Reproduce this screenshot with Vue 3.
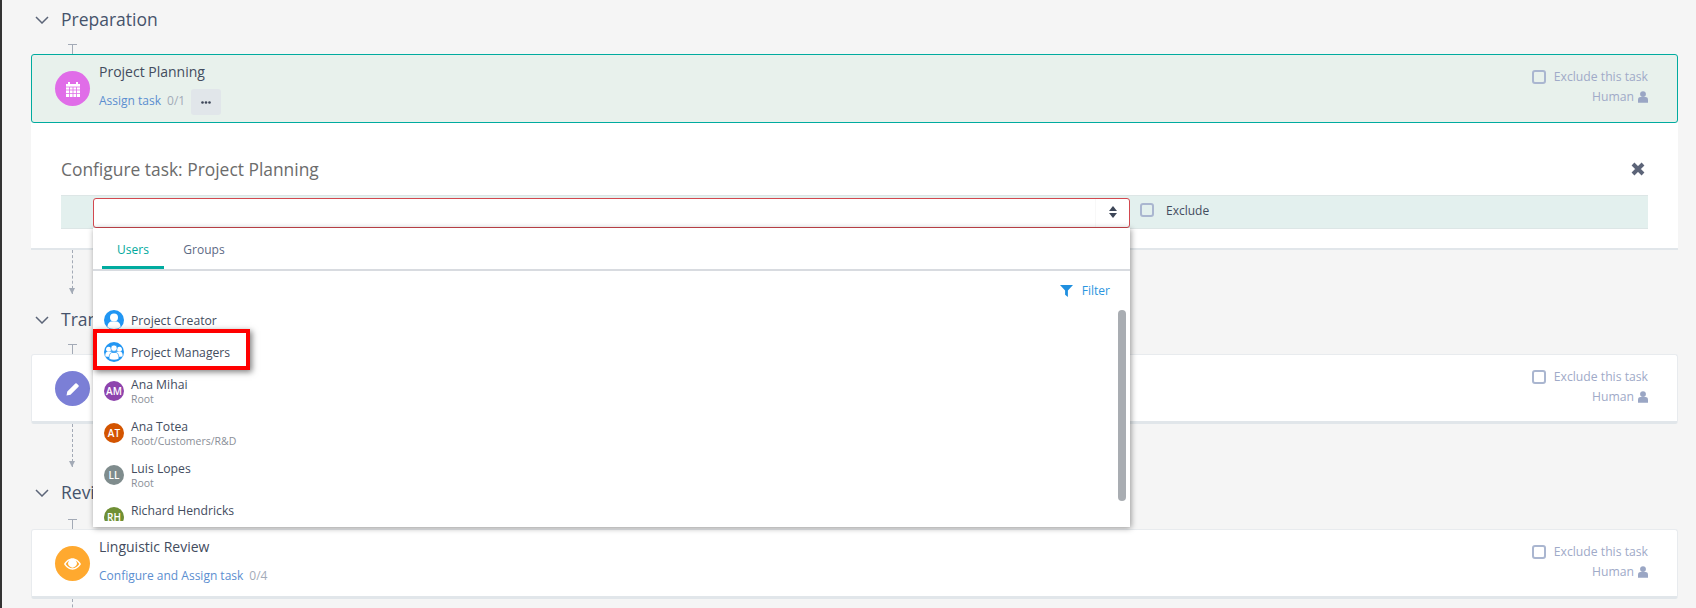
<script setup>
const users = [
  { initials: 'AM', name: 'Ana Mihai', path: 'Root', color: '#8e44ad' },
  { initials: 'AT', name: 'Ana Totea', path: 'Root/Customers/R&D', color: '#d35400' },
  { initials: 'LL', name: 'Luis Lopes', path: 'Root', color: '#7f8c8d' },
  { initials: 'RH', name: 'Richard Hendricks', path: 'Root', color: '#6f8f35' }
]
</script>

<template>
  <div class="page">
    <section class="stage">
      <header class="stage-head">
        <svg class="chevron" viewBox="0 0 14 8"><path d="M1 1l6 6 6-6" /></svg>
        <h2>Preparation</h2>
      </header>
      <div class="tee"></div>
      <article class="card selected">
        <span class="badge purple">
          <svg viewBox="0 0 16 16" class="glyph">
            <path fill="#fff" d="M1 3h2V1h2v2h6V1h2v2h2v13H1z" />
            <path stroke="#e06de8" stroke-width=".8" fill="none" d="M1 6h14M1 9h14M1 12.500h14M4.500 6v10M8 6v10M11.500 6v10" />
          </svg>
        </span>
        <div class="card-main">
          <div class="task-title">Project Planning</div>
          <div class="task-links">
            <a>Assign task</a><span class="count">0/1</span>
            <span class="more">
              <svg viewBox="0 0 10 3" class="dots"><circle cx="1.500" cy="1.500" r="1.300" /><circle cx="5" cy="1.500" r="1.300" /><circle cx="8.500" cy="1.500" r="1.300" /></svg>
            </span>
          </div>
        </div>
        <div class="card-side">
          <label class="exclude"><i class="check"></i>Exclude this task</label>
          <div class="kind">Human
            <svg viewBox="0 0 12 14" class="user"><circle cx="6" cy="3.500" r="3.500" /><path d="M0 14v-4c0-2 1.500-3 3-3h6c1.500 0 3 1 3 3v4z" /></svg>
          </div>
        </div>
      </article>

      <div class="config">
        <div class="config-head">
          <h3>Configure task: Project Planning</h3>
          <svg class="close" viewBox="0 0 14 14"><path d="M2 2l10 10M12 2L2 12" /></svg>
        </div>
        <div class="assign-row">
          <div class="select">
            <span class="carets"><i class="up"></i><i class="down"></i></span>
          </div>
          <i class="check row-check"></i>
          <span class="row-label">Exclude</span>

          <div class="dropdown">
            <nav class="tabs">
              <span class="tab active">Users</span>
              <span class="tab">Groups</span>
            </nav>
            <div class="filter">
              <svg viewBox="0 0 14 14" class="funnel"><path d="M0 1h14L8.500 7v7L5.500 11.500V7z" /></svg>
              <span>Filter</span>
            </div>
            <ul class="list">
              <li class="entry">
                <svg class="roundel" viewBox="0 0 20 20">
                  <circle cx="10" cy="10" r="10" fill="#2196f3" />
                  <circle cx="10" cy="7.500" r="4" fill="#fff" />
                  <path d="M3.500 17c0-4 2.500-5.500 4-5.500h5c1.500 0 4 1.500 4 5.500-3 2.500-10 2.500-13 0z" fill="#fff" />
                </svg>
                <span class="entry-name">Project Creator</span>
              </li>
              <li class="entry">
                <svg class="roundel" viewBox="0 0 20 20">
                  <circle cx="10" cy="10" r="10" fill="#2196f3" />
                  <circle cx="4.600" cy="7.300" r="2.500" fill="#fff" />
                  <circle cx="15.400" cy="7.300" r="2.500" fill="#fff" />
                  <path d="M1.400 14.500c-.4-3.500 1-4.800 2.400-4.800h4v5.500zM18.600 14.500c.4-3.500-1-4.800-2.400-4.800h-4v5.500z" fill="#fff" />
                  <circle cx="10" cy="6.200" r="3.200" fill="#fff" stroke="#2196f3" stroke-width=".7" />
                  <path d="M5 16.800c0-4.500 1.600-6.300 3.200-6.300h3.600c1.600 0 3.200 1.800 3.200 6.300-2 1.700-8 1.700-10 0z" fill="#fff" stroke="#2196f3" stroke-width=".7" />
                </svg>
                <span class="entry-name">Project Managers</span>
              </li>
              <li v-for="u in users" :key="u.initials" class="person">
                <span class="avatar" :style="{ background: u.color }">{{ u.initials }}</span>
                <div class="person-text">
                  <div class="entry-name">{{ u.name }}</div>
                  <div class="entry-path">{{ u.path }}</div>
                </div>
              </li>
            </ul>
            <div class="scrollbar"></div>
            <div class="marker"></div>
          </div>
        </div>
      </div>
      <div class="dash d1"></div>
    </section>

    <section class="stage">
      <header class="stage-head">
        <svg class="chevron" viewBox="0 0 14 8"><path d="M1 1l6 6 6-6" /></svg>
        <h2>Translation</h2>
      </header>
      <div class="tee"></div>
      <article class="card">
        <span class="badge indigo">
          <svg viewBox="0 0 16 16" class="glyph">
            <path fill="#fff" d="M1.500 14.500l.8-4 8-8a1 1 0 0 1 1.400 0l1.800 1.800a1 1 0 0 1 0 1.400l-8 8zM3.200 11l1.800 1.800" />
          </svg>
        </span>
        <div class="card-main">
          <div class="task-title">Translation</div>
          <div class="task-links"><a>Configure and Assign task</a><span class="count">0/4</span></div>
        </div>
        <div class="card-side">
          <label class="exclude"><i class="check"></i>Exclude this task</label>
          <div class="kind">Human
            <svg viewBox="0 0 12 14" class="user"><circle cx="6" cy="3.500" r="3.500" /><path d="M0 14v-4c0-2 1.500-3 3-3h6c1.500 0 3 1 3 3v4z" /></svg>
          </div>
        </div>
      </article>
      <div class="dash d2"></div>
    </section>

    <section class="stage">
      <header class="stage-head">
        <svg class="chevron" viewBox="0 0 14 8"><path d="M1 1l6 6 6-6" /></svg>
        <h2>Review</h2>
      </header>
      <div class="tee low"></div>
      <article class="card">
        <span class="badge amber">
          <svg viewBox="0 0 18 12" class="eye">
            <path fill-rule="evenodd" fill="#fff" d="M0 6c2-3.500 5.500-6 9-6s7 2.500 9 6c-2 3.500-5.500 6-9 6s-7-2.500-9-6zm1.800 0C3.500 8.500 6 10.500 9 10.500s5.500-2 7.200-4.500C14.800 4 13.500 2.800 12.300 2.200a4.500 4.500 0 1 1-6.600 0C4.500 2.800 3.200 4 1.800 6z" />
          </svg>
        </span>
        <div class="card-main">
          <div class="task-title">Linguistic Review</div>
          <div class="task-links"><a>Configure and Assign task</a><span class="count">0/4</span></div>
        </div>
        <div class="card-side">
          <label class="exclude"><i class="check"></i>Exclude this task</label>
          <div class="kind">Human
            <svg viewBox="0 0 12 14" class="user"><circle cx="6" cy="3.500" r="3.500" /><path d="M0 14v-4c0-2 1.500-3 3-3h6c1.500 0 3 1 3 3v4z" /></svg>
          </div>
        </div>
      </article>
      <div class="dash d3"></div>
    </section>
  </div>
</template>

<style scoped>
.page {
  height: 608px;
  overflow: hidden;
  box-sizing: border-box;
  padding: 0 18px 0 29px;
  border-left: 2px solid #333;
  background: #f5f5f5;
  font-family: "Open Sans", "Noto Sans", sans-serif;
  color: #3d4658;
}
.stage-head {
  height: 40px;
  display: flex;
  align-items: center;
}
.chevron {
  width: 14px;
  height: 8px;
  margin-left: 4px;
  fill: none;
  stroke: #5c6578;
  stroke-width: 1.500;
}
.stage-head h2 {
  margin: 0 0 2px 12px;
  font-size: 17.500px;
  font-weight: 400;
  color: #46536b;
}
.tee {
  width: 9px;
  height: 14px;
  margin-left: 37px;
  box-sizing: border-box;
  position: relative;
}
.tee.low { margin-top: 2px; }
.tee::before {
  content: "";
  position: absolute;
  left: 0;
  top: 4px;
  width: 9px;
  height: 1px;
  background: #a3aab6;
}
.tee::after {
  content: "";
  position: absolute;
  left: 4px;
  top: 4px;
  width: 1px;
  height: 10px;
  background: #a3aab6;
}
.card {
  height: 70px;
  box-sizing: border-box;
  display: flex;
  align-items: flex-start;
  background: #fff;
  border: 1px solid #e8ebee;
  border-bottom: 3px solid #e1e6ea;
  border-radius: 3px;
  padding: 16px 29px 0 23px;
}
.card.selected {
  height: 69px;
  background: #e8f1ec;
  border: 1px solid #00ab9f;
}
.badge {
  width: 35px;
  height: 35px;
  border-radius: 50%;
  display: flex;
  align-items: center;
  justify-content: center;
  flex: none;
}
.purple { background: #e06de8; }
.indigo { background: #7b7fd6; }
.amber { background: #ffa92f; }
.glyph { width: 16px; height: 16px; }
.eye { width: 17px; height: 12px; }
.card-main {
  margin: -10px 0 0 9px;
  flex: 1;
}
.task-title {
  height: 22px;
  line-height: 22px;
  font-size: 14px;
  color: #434c5e;
}
.task-links {
  height: 26px;
  margin-top: 6px;
  display: flex;
  align-items: center;
  font-size: 12px;
}
.task-links a { color: #5b8ed0; margin-bottom: 4px; }
.count { margin: 0 0 4px 6px; color: #a3abb8; }
.more {
  width: 30px;
  height: 26px;
  margin-left: 6px;
  border-radius: 3px;
  background: #e1e6ea;
  display: flex;
  align-items: center;
  justify-content: center;
}
.dots { width: 10px; height: 3px; fill: #3d4658; }
.card-side {
  margin-top: -4px;
  text-align: right;
  font-size: 12.200px;
  color: #a0aac8;
}
.exclude {
  display: flex;
  align-items: center;
  height: 20px;
  line-height: 20px;
}
.check {
  display: block;
  width: 14px;
  height: 14px;
  box-sizing: border-box;
  border: 2px solid #aab6d0;
  border-radius: 3px;
  margin-right: 8px;
}
.kind {
  height: 20px;
  line-height: 20px;
  display: flex;
  align-items: center;
  justify-content: flex-end;
  gap: 4px;
}
.user { width: 10px; height: 12px; fill: #9aa6c4; }
.config {
  height: 127px;
  box-sizing: border-box;
  background: #fff;
  border-bottom: 2px solid #e1e6ea;
  padding: 0 30px;
}
.config-head {
  height: 72px;
  display: flex;
  align-items: flex-end;
  justify-content: space-between;
}
.config-head h3 {
  margin: 0 0 14px;
  font-size: 17.400px;
  font-weight: 400;
  color: #6c6c6c;
}
.close {
  width: 14px;
  height: 14px;
  margin: 0 3px 19px 0;
  fill: none;
  stroke: #5c6478;
  stroke-width: 4;
}
.assign-row {
  position: relative;
  height: 34px;
  box-sizing: border-box;
  display: flex;
  align-items: center;
  padding-left: 32px;
  background: #e3f0ee;
  border-top: 1px solid #dde6e6;
  border-bottom: 1px solid #dde6e6;
  font-size: 12px;
}
.select {
  width: 1037px;
  height: 30px;
  box-sizing: border-box;
  background: #fff;
  border: 1px solid #d2484f;
  border-radius: 3px;
  position: relative;
  flex: none;
  margin-top: 2px;
}
.select::before {
  content: "";
  position: absolute;
  right: 33px;
  top: 0;
  width: 1px;
  height: 100%;
  background: #f8f8f8;
}
.carets {
  position: absolute;
  right: 12px;
  top: 7px;
  display: flex;
  flex-direction: column;
  gap: 2px;
}
.up, .down {
  display: block;
  width: 0;
  height: 0;
  border-left: 4.500px solid transparent;
  border-right: 4.500px solid transparent;
}
.up { border-bottom: 5px solid #3d4658; }
.down { border-top: 5px solid #3d4658; }
.row-check { margin: 0 12px 4px 10px; }
.row-label { color: #434c5e; margin-bottom: 4px; }
.dropdown {
  position: absolute;
  left: 32px;
  top: 32px;
  width: 1037px;
  height: 299px;
  box-sizing: border-box;
  background: #fff;
  box-shadow: 1px 1px 6px rgba(0, 0, 0, .4);
  z-index: 5;
}
.tabs {
  height: 43px;
  box-sizing: border-box;
  display: flex;
  padding-left: 9px;
  border-bottom: 2px solid #d8dbe0;
}
.tab {
  width: 62px;
  height: 41px;
  box-sizing: border-box;
  padding-top: 13px;
  text-align: center;
  font-size: 12px;
  color: #5d6a85;
}
.tab + .tab { margin-left: 9px; }
.tab.active {
  color: #00a99d;
  border-bottom: 3px solid #00ab9f;
}
.filter {
  height: 33px;
  padding-top: 6px;
  box-sizing: border-box;
  display: flex;
  align-items: center;
  justify-content: flex-end;
  gap: 9px;
  padding-right: 20px;
  font-size: 12px;
  color: #2a96e0;
}
.funnel { width: 13px; height: 13px; fill: #1f8fdf; }
.list {
  list-style: none;
  margin: 0;
  padding: 0 0 0 11px;
  height: 217px;
  overflow: hidden;
}
.entry {
  height: 32px;
  display: flex;
  align-items: center;
  gap: 7px;
}
.entry + .person { margin-top: 2px; }
.roundel { width: 20px; height: 20px; flex: none; }
.entry-name { font-size: 12.200px; color: #434c5e; line-height: 15px; }
.entry-path { font-size: 10.500px; color: #8b8f98; line-height: 14px; }
.person {
  height: 42px;
  display: flex;
  align-items: center;
  gap: 7px;
}
.avatar {
  width: 20px;
  height: 20px;
  flex: none;
  border-radius: 50%;
  color: #fff;
  font-size: 10px;
  font-weight: 600;
  line-height: 20px;
  text-align: center;
}
.scrollbar {
  position: absolute;
  right: 4px;
  top: 82px;
  width: 8px;
  height: 191px;
  border-radius: 4px;
  background: #a9adb2;
}
.marker {
  position: absolute;
  left: 0;
  top: 101px;
  width: 157px;
  height: 41px;
  box-sizing: border-box;
  border: 4px solid #f00;
  box-shadow: 2px 2px 6px rgba(0, 0, 0, .5);
}
.dash {
  margin-left: 41px;
  width: 0;
  position: relative;
  border-left: 1px dashed #a3aab6;
}
.dash::after {
  content: "";
  position: absolute;
  left: -4px;
  bottom: 0;
  border-left: 3.500px solid transparent;
  border-right: 3.500px solid transparent;
  border-top: 6px solid #a3aab6;
}
.d1 { height: 44px; margin-bottom: 6px; }
.d2 { height: 43px; margin-bottom: 6px; }
.d3 { height: 30px; }
.d3::after { display: none; }
</style>

<style>
html, body { margin: 0; background: #f5f5f5; }
</style>
